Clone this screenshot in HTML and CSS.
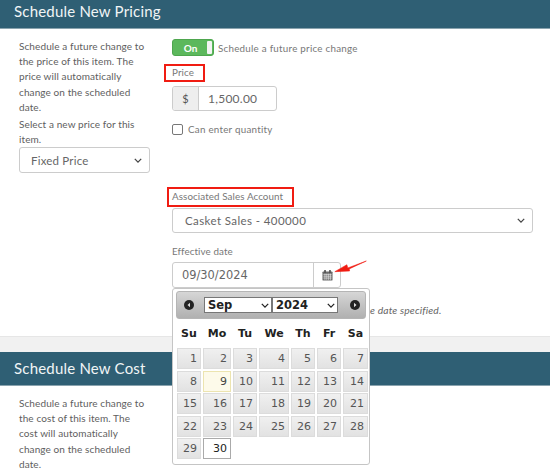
FILE: index.html
```html
<!DOCTYPE html>
<html lang="en">
<head>
<meta charset="utf-8">
<title>Schedule New Pricing</title>
<link rel="stylesheet" href="styles.css">
</head>
<body>
<div class="page">
  <section class="panel first">
    <h2 class="bar">Schedule New Pricing</h2>
    <div class="cols">
      <div class="side">
        <p class="para">Schedule a future change to the price of this item. The price will automatically change on the scheduled date.</p>
        <p class="para second">Select a new price for this item.</p>
        <div class="select side-select"><span>Fixed Price</span><svg class="chev" viewBox="0 0 10 6"><path d="M1 1l4 4 4-4"/></svg></div>
      </div>
      <div class="main">
        <div class="toggle-row">
          <div class="toggle"><span class="on">On</span><span class="knob"></span></div>
          <span class="note">Schedule a future price change</span>
        </div>
        <div class="label price-label">Price</div>
        <div class="money"><span class="dollar">$</span><span class="amount">1,500.00</span></div>
        <div class="check-row"><span class="check"></span><span class="note">Can enter quantity</span></div>
        <div class="label account-label">Associated Sales Account</div>
        <div class="select account-select"><span>Casket Sales - 400000</span><svg class="chev" viewBox="0 0 10 6"><path d="M1 1l4 4 4-4"/></svg></div>
        <div class="label date-label">Effective date</div>
        <div class="date-group">
          <span class="date-input">09/30/2024</span>
          <span class="date-btn">
            <svg class="cal-icon" viewBox="0 0 12 12"><rect x="0.5" y="1.5" width="11" height="10" rx="1" fill="#6d6d6d"/><rect x="2.5" y="0" width="1.6" height="3" fill="#444"/><rect x="7.9" y="0" width="1.6" height="3" fill="#444"/><path d="M1.5 4.8h9M1.5 6.8h9M1.5 8.8h9M3.2 4v6.8M5.2 4v6.8M7.2 4v6.8M9.2 4v6.8" stroke="#e6e6e6" stroke-width=".7" fill="none"/></svg>
          </span>
        </div>
        <p class="hint">e date specified.</p>
      </div>
    </div>
  </section>
  <section class="panel last">
    <h2 class="bar">Schedule New Cost</h2>
    <div class="cols">
      <div class="side">
        <p class="para">Schedule a future change to the cost of this item. The cost will automatically change on the scheduled date.</p>
      </div>
    </div>
  </section>

  <div class="box box-price"></div>
  <div class="box box-account"></div>
  <svg class="arrow" viewBox="0 0 40 16"><path d="M36 1L16 8.500 15 5 2 12.500 18 11.800 17.500 9.500Z" fill="#f01c12" stroke="#f01c12" stroke-width=".6"/></svg>

  <div class="picker">
    <div class="picker-head">
      <span class="nav"><svg viewBox="0 0 10 10"><circle cx="5" cy="5" r="5" fill="#222"/><path d="M6 2.800L3.500 5 6 7.200Z" fill="#ddd"/></svg></span>
      <div class="mini-select month"><span>Sep</span><svg class="chev dark" viewBox="0 0 10 6"><path d="M1 1l4 4 4-4"/></svg></div>
      <div class="mini-select year"><span>2024</span><svg class="chev dark" viewBox="0 0 10 6"><path d="M1 1l4 4 4-4"/></svg></div>
      <span class="nav"><svg viewBox="0 0 10 10"><circle cx="5" cy="5" r="5" fill="#222"/><path d="M4 2.800L6.500 5 4 7.200Z" fill="#ddd"/></svg></span>
    </div>
    <div class="days">
      <span>Su</span><span>Mo</span><span>Tu</span><span>We</span><span>Th</span><span>Fr</span><span>Sa</span>
    </div>
    <div class="dates">
      <span>1</span><span>2</span><span>3</span><span>4</span><span>5</span><span>6</span><span>7</span>
      <span>8</span><span class="today">9</span><span>10</span><span>11</span><span>12</span><span>13</span><span>14</span>
      <span>15</span><span>16</span><span>17</span><span>18</span><span>19</span><span>20</span><span>21</span>
      <span>22</span><span>23</span><span>24</span><span>25</span><span>26</span><span>27</span><span>28</span>
      <span>29</span><span class="active">30</span>
    </div>
  </div>
</div>
</body>
</html>
```

FILE: styles.css
```css
* { box-sizing: border-box; }
html, body { margin: 0; padding: 0; }
body {
  width: 550px;
  height: 472px;
  overflow: hidden;
  background: #fff;
  font-family: "Lato", "Liberation Sans", sans-serif;
  color: #555;
}
.page { position: relative; width: 550px; height: 472px; overflow: hidden; background: #f1f1f1; }
.panel { background: #fff; }
.panel.first { height: 337px; border-bottom: 1px solid #e6e6e6; margin-bottom: 15px; }
.panel.last { height: 120px; }
.bar {
  margin: 0;
  height: 29px;
  padding: 0 14px 6px;
  display: flex;
  align-items: center;
  background: #2f5f74;
  border-bottom: 1px solid #8aa3ae;
  color: #f1f5f6;
  font-size: 15px;
  font-weight: 400;
  letter-spacing: .2px;
}
.panel.last .bar { height: 34px; padding: 0 14px 1px; }
.cols { display: flex; }
.side { width: 172px; padding: 10px 26px 0 19px; flex: none; }
.para { margin: 0; font-size: 10px; line-height: 15.200px; color: #606060; letter-spacing: .1px; }
.para.second { margin-top: 2px; }
.select {
  display: flex;
  align-items: center;
  justify-content: space-between;
  border: 1px solid #ccc;
  border-radius: 3px;
  background: #fff;
  color: #666;
}
.side-select { width: 131px; height: 26px; margin-top: 0; padding: 0 7px 0 11px; font-size: 11.500px; letter-spacing: .2px; }
.chev { width: 8px; height: 5px; fill: none; stroke: #444; stroke-width: 1.600; flex: none; }
.main { flex: 1; min-width: 0; padding-top: 10px; }
.toggle-row { display: flex; align-items: center; gap: 4px; height: 17px; }
.toggle {
  width: 42px;
  height: 17px;
  display: flex;
  align-items: stretch;
  background: #5cb85c;
  border: 1px solid #4ea64e;
  border-radius: 3px;
  padding: 1px;
}
.on { flex: 1; display: flex; align-items: center; justify-content: center; color: #fff; font-size: 10px; font-weight: 700; }
.knob { width: 5px; background: #f4f4f4; border-radius: 1px; }
.note { font-size: 9.800px; color: #777; letter-spacing: .25px; }
.label { font-size: 9.800px; color: #777; letter-spacing: .1px; line-height: 12px; }
.price-label { margin-top: 10px; }
.money { display: flex; width: 105px; height: 25px; margin-top: 8px; border: 1px solid #ccc; border-radius: 3px; overflow: hidden; }
.dollar { width: 26px; display: flex; align-items: center; justify-content: center; background: #eee; border-right: 1px solid #ccc; font-size: 11px; }
.amount { padding-left: 9px; display: flex; align-items: center; font-size: 12px; letter-spacing: .25px; color: #666; }
.check-row { display: flex; align-items: center; gap: 5px; margin-top: 12px; height: 12px; }
.check { width: 11px; height: 11px; border: 1px solid #777; border-radius: 2px; background: #fff; }
.account-label { margin-top: 55px; }
.account-select { width: 361px; height: 25px; margin-top: 6px; padding: 0 7px 0 12px; font-size: 11.500px; letter-spacing: .4px; }
.date-label { margin-top: 12px; }
.date-group { display: flex; width: 169px; height: 26px; margin-top: 5px; border: 1px solid #ccc; border-radius: 3px; }
.date-input { width: 141px; display: flex; align-items: center; padding-left: 9px; border-right: 1px solid #ccc; font-size: 11.400px; font-family: "DejaVu Sans", sans-serif; color: #666; }
.date-btn { flex: 1; display: flex; align-items: center; justify-content: center; }
.cal-icon { width: 11px; height: 11px; }
.hint { margin: 16px 0 0; padding-left: 198px; font-size: 10.300px; font-style: italic; color: #666; white-space: nowrap; letter-spacing: .15px; }

.box { position: absolute; border: 2px solid #f01c12; }
.box-price { left: 164px; top: 64px; width: 41px; height: 18px; }
.box-account { left: 167px; top: 187px; width: 127px; height: 20px; }
.arrow { position: absolute; left: 333px; top: 260px; width: 37px; height: 15px; }

.picker {
  position: absolute;
  left: 172px;
  top: 288px;
  width: 198px;
  height: 177px;
  background: #fff;
  border: 1px solid #c5c5c5;
  border-radius: 3px;
  padding: 2px 3px;
  font-family: "DejaVu Sans", sans-serif;
}
.picker-head {
  height: 28px;
  display: flex;
  align-items: center;
  padding: 0 5px 0 7px;
  background: linear-gradient(#d6d6d6, #b0b0b0);
  border: 1px solid #b5b5b5;
  border-radius: 3px;
}
.nav { width: 10px; height: 10px; display: flex; flex: none; }
.nav svg { width: 10px; height: 10px; }
.mini-select {
  height: 16px;
  display: flex;
  align-items: center;
  justify-content: space-between;
  background: #fff;
  border: 1px solid #777;
  padding: 0 2px 0 3px;
  font-size: 11.500px;
  font-weight: 700;
  color: #222;
}
.month { width: 68px; margin-left: 10px; }
.year { width: 66px; margin-right: 12px; margin-left: 0; }
.chev.dark { stroke: #222; }
.days, .dates {
  display: grid;
  grid-template-columns: 24px 28px 24px 30px 24px 24px 25px;
  column-gap: 2px;
  margin-left: 1px;
}
.days { height: 29px; align-items: center; text-align: center; font-size: 11px; font-weight: 700; color: #222; }
.dates { row-gap: 1.500px; grid-auto-rows: 21px; }
.dates span {
  display: flex;
  align-items: center;
  justify-content: flex-end;
  padding-right: 3px;
  font-size: 11px;
  color: #555;
  background: linear-gradient(#f0f0f0, #e2e2e2);
  border: 1px solid #dcdcdc;
}
.dates .today { background: #fdfaea; border-color: #ece4b0; color: #444; }
.dates .active { background: #fff; border-color: #aaa; color: #222; }
```
